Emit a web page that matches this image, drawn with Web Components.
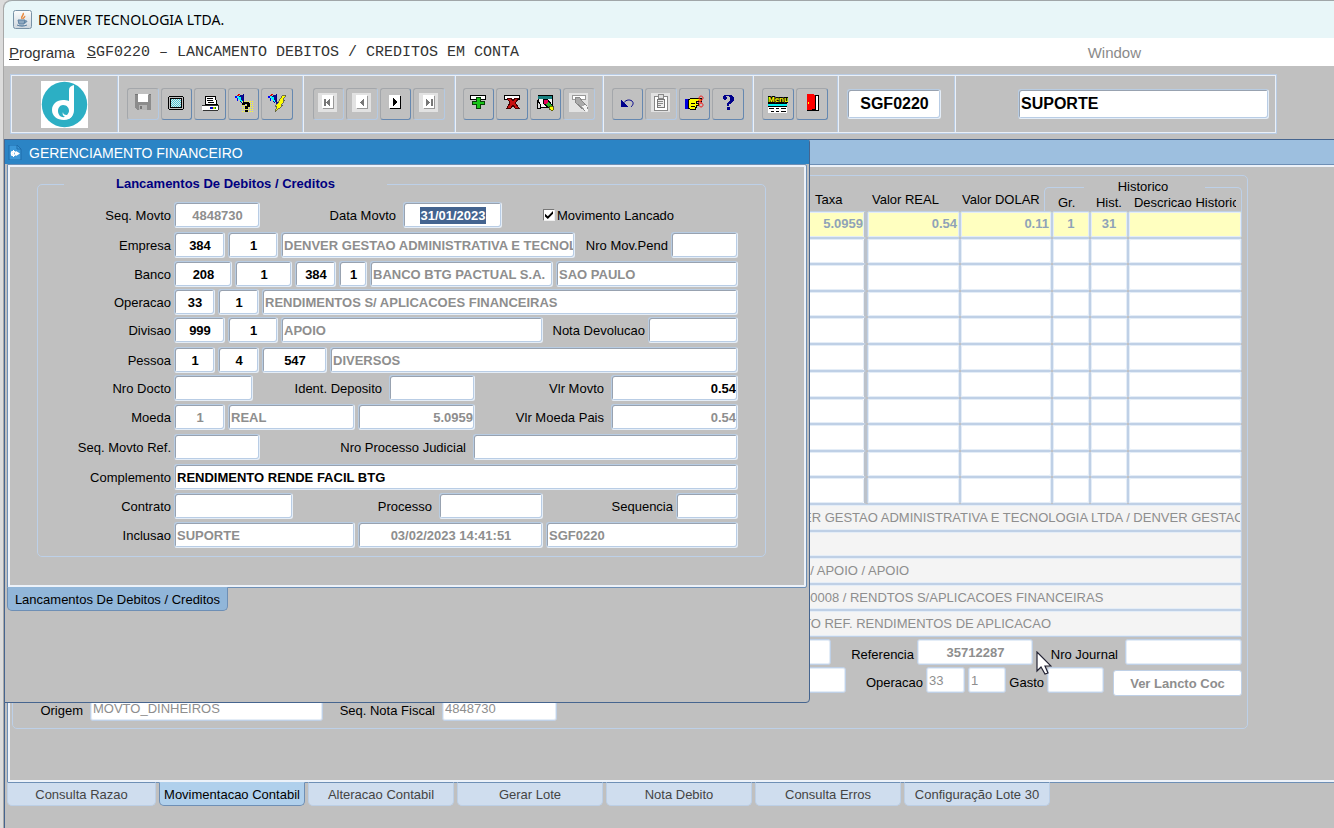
<!DOCTYPE html>
<html lang="pt-BR">
<head>
<meta charset="utf-8">
<title>DENVER TECNOLOGIA LTDA.</title>
<style>
html, body { margin: 0; min-height: 100%; }
body { background: #dcdcdc; font: 13px/16px "Liberation Sans", Arial, sans-serif; color: #000; overflow: hidden; }
</style>
</head>
<body>
<sgf-app></sgf-app>

<script>
const define = (name, css, html, setup) => {
  const tpl = document.createElement('template');
  tpl.innerHTML = '<style>*{box-sizing:border-box}' + css + '</style>' + html;
  customElements.define(name, class extends HTMLElement {
    connectedCallback() {
      if (this.shadowRoot) return;
      this.attachShadow({ mode: 'open' }).append(tpl.content.cloneNode(true));
      if (setup) setup(this, this.shadowRoot);
    }
  });
};

const FLASHLIGHT = '<path d="M2 3l3-2 1 1-3 2z" fill="#d00"/><path d="M3 3l6-1 1 6-3 2z" fill="#0d0d8c"/><path d="M3 3l3 5 2 1-1-5z" fill="#0ff"/><path d="M1 3h2v2H1zM3 5h1v3H3z" fill="#00f"/><path d="M9 1h1v8h1v2H9z" fill="#00008b"/>';
const PAGE = (ink, edge) => '<path d="M5 3h11v13H5z" fill="' + edge + '"/><path d="M4 2h11v13H4z" fill="#fff"/><g fill="' + ink + '">';
const PALE = '<path d="M0 0h19v19H0z" fill="#e2e2e2"/>';
const ICONS = {
  save: '<path d="M2 2h16v15H4l-2-2z" fill="#8c8c8c"/><path d="M5 1h10v8H5z" fill="#fff"/><path d="M6 12h8v5H6z" fill="#b4b4b4"/><path d="M7 13h2v3H7z" fill="#777"/><path d="M2 1h3v1H2zM16 1h2v1h-2z" fill="#777"/>',
  screen: '<path d="M3 3h14v1h1v12h-1v1H3v-1H2V4h1z"/><path d="M3 4h14v12H3z" fill="#c0c0c0"/><path d="M4 5h12v10H4z"/><path d="M5 6h10v8H5z" fill="#e8e8e8"/><path d="M5 6.500h10M5 8.500h10M5 10.500h10M5 12.500h10" stroke="#40c8d8" stroke-dasharray="1 1"/><path d="M6 7.500h9M6 9.500h9M6 11.500h9M6 13.500h9" stroke="#40c8d8" stroke-dasharray="1 1"/>',
  print: '<path d="M6 3h9l2 8H5V3z" fill="#fff" stroke="#000"/><path d="M7 5.500h6M7 7.500h6M8 9.500h6" stroke="#000"/><path d="M2 12h16v5H2z" fill="#fff"/><path d="M2 12.500h16M18 12v5M3 17.500h15" stroke="#333"/><path d="M10 14h3v2h-3z" fill="#00c"/><path d="M13 14h2v2h-2z" fill="#d0d000"/><path d="M15 14h1v2h-1z" fill="#0a0"/>',
  ask: FLASHLIGHT + '<path d="M8 8.500h11M8 10.500h11M8 12.500h11M8 14.500h11M8 16.500h11M8 18.500h11" stroke="#ffff20" stroke-dasharray="1 1"/><path d="M9 9h6v1h1v4h-2v2h-3v-3h2v-2h-2v1H8v-2h1zM11 17h3v2h-3z"/>',
  bolt: FLASHLIGHT + '<path d="M16 2h3l-3 5h2l-4 5h2l-8 7 2-6H8l4-4h-1z" fill="#ff0" stroke="#554" stroke-width=".8"/>',
  first: PALE + PAGE('#777', '#999') + '<path d="M6 6h2v7H6zM12 6v7L8 9.500z"/></g>',
  prev: PALE + PAGE('#777', '#999') + '<path d="M12 6v7L8 9.500z"/></g>',
  next: PAGE('#000', '#000') + '<path d="M8 5v8l4-4z"/></g>',
  last: PALE + PAGE('#777', '#999') + '<path d="M12 6h2v7h-2zM7 6v7l4-3.500z"/></g>',
  add: '<path d="M2 2h15v4H2z" fill="#fff" stroke="#000"/><path d="M8.500 4.500h4v4h4v3h-4v4h-4v-4h-4v-3h4z" fill="#18c418" stroke="#064006"/>',
  remove: '<path d="M2 2h15v4H2z" fill="#fff" stroke="#000"/><path d="M5 5h4l2 3 2-3h4l-4 5 4 5h-4l-2-3-2 3H5l3-5z" fill="#c81010" stroke="#400"/>',
  clear: '<path d="M3 2h14v12H3z" fill="#f4f4f4" stroke="#000"/><path d="M3 3h14v3H3z" fill="#188080"/><path d="M2 7l3 4v4H2z" fill="#ddd" stroke="#000"/><path d="M8 6l4 0 6 7-3 3-7-6z" fill="#e8005c" stroke="#000"/><path d="M13 9l5 5-2 3-5-6z" fill="#28b428"/><path d="M15 13l3 0 1 3-2 2-3-2z" fill="#ff0" stroke="#000" stroke-width=".6"/>',
  noclear: PALE + '<path d="M3 2h13v4H3z" fill="#fff" stroke="#999"/><path d="M6 5l4-1 9 11-3 3L6 9z" fill="#aaa" stroke="#888"/><path d="M13 13l4-1 2 5-2 2z" fill="#f4f4f4"/>',
  undo: '<path d="M6 11c2-4 6-5 9-3 2 2 1 4-1 6" fill="none" stroke="#00008b" shape-rendering="auto"/><path d="M4 7v7h7z" fill="#00008b"/>',
  clip: PALE + '<path d="M3 3h13v14H3z" fill="#fff" stroke="#888"/><path d="M6 6h7v8H6z" fill="#eee" stroke="#777"/><path d="M7 1h5v4H7z" fill="#ddd" stroke="#888"/><path d="M7 8.500h5M7 10.500h5M7 12.500h3" stroke="#888"/>',
  hand: '<path d="M1 6h3v10H1z" fill="#00d"/><path d="M4 7l4-2h9v3h-5v2h2v2h-2v2h-1v2H6l-2-1z" fill="#ff0" stroke="#000"/><path d="M7 10h4M7 13h4" stroke="#000"/><path d="M17 3a2 2 0 1 0 .1 0M17 10a2 2 0 1 0 .1 0M14 7l4 3M18 7l-4 3" fill="none" stroke="#f02020" shape-rendering="auto"/>',
  help: '<path d="M6 2h8v1h1v1h1v4h-1v1h-1v1h-1v1h-2v2H9v-3h1V9h1V8h1V4h-1V3H8v1h1v2H8v1H6V6H5V3h1zM9 14h3v3H9z" fill="#00008b"/>',
  menu: '<text x="0" y="9" font-family="Liberation Sans, sans-serif" font-weight="700" font-size="8" fill="#ff0" stroke="#000" stroke-width="2" paint-order="stroke">Menu</text><path d="M0 10h19v1H0zM0 13h19v1H0z"/><path d="M0 11h19v2H0z" fill="#0ee"/><path d="M0 14h19v6H0z" fill="#fff"/><path d="M1 15.500h5M8 15.500h3M13 15.500h5M3 18.500h3M8 18.500h3M13 18.500h5" stroke="#000"/>',
  exit: '<path d="M5 2h11v15H5z" fill="#fff" stroke="#000"/><path d="M5 1h6l2 2v15l-3-1H5z" fill="#f00"/><path d="M10 16h3v2h-3zM13 3h1v14h-1z"/><path d="M6 9h1v2H6z" fill="#ff0"/>'
};

/* One push button of the toolbar, with its icon. */
define('tool-button', `
:host { display: block; min-width: 0; }
button { display: flex; align-items: center; justify-content: center; width: 100%; height: 32px; margin: 0; padding: 0 0 2px;
  background: none; border: 1px solid #a4a7ab; border-right-color: #6688b0; border-bottom-color: #6688b0; border-radius: 3px; }
button:disabled { border-right-color: #b4c9e2; border-bottom-color: #b4c9e2; }
svg { width: 20px; height: 20px; flex: none; }
`, '<button type="button"><svg viewBox="0 0 20 20" shape-rendering="crispEdges"></svg></button>', (el, root) => {
  const b = root.querySelector('button');
  b.setAttribute('aria-label', el.getAttribute('label'));
  b.disabled = el.hasAttribute('off');
  root.querySelector('svg').innerHTML = ICONS[el.getAttribute('icon')];
});

/* A cell of the toolbar; its buttons share the width evenly. */
define('tool-group', `
:host { display: flex; align-items: center; justify-content: center; border-left: 1px solid #b9cce4; box-shadow: inset 1px 0 0 #eaf0f8; }
div { display: grid; grid-auto-flow: column; grid-auto-columns: 1fr; gap: 2px; flex: none; width: var(--inner, auto); }
`, '<div><slot></slot></div>');

define('denver-logo', ':host{display:block;width:47px;height:47px}svg{display:block}', `
<svg width="47" height="47" viewBox="0 0 47 47"><path d="M0 0h47v47H0z" fill="#fff"/><circle cx="23.500" cy="23.500" r="22.700" fill="#2cafc4"/>
<path d="M33 4v25c0 6-4 10-10 10-7 0-12-4-12-10s5-10 11-10c2 0 4 0 6 1V9c0-3 2-4 5-5z" fill="#fff"/>
<path d="M22 24c4 0 6 3 6 6 0 1-1 3-2 4-3 0-4-1-4-3-1 2 0 4 2 5-5 1-7-3-7-6s2-6 5-6z" fill="#2cafc4"/><path d="M24 35c4 1 7-1 8-4 0 5-4 8-8 7z" fill="#fff"/></svg>`);

define('title-bar', `
:host { display: flex; align-items: center; gap: 6px; height: 38px; padding-left: 9px; background: #e8f6f8; border-top: 1px solid #a0a6a8; border-radius: 8px 0 0 0; font: 14px/20px "Noto Sans", sans-serif; }
`, `<svg width="19" height="19" viewBox="0 0 19 19"><defs><linearGradient id="g" x2="0" y2="1"><stop stop-color="#fdfdfd"/><stop offset="1" stop-color="#cdd6dd"/></linearGradient></defs>
<rect x=".5" y=".5" width="18" height="18" rx="2" fill="url(#g)" stroke="#7892a6"/><path d="M10 3c2 2-3 3-1 6M11.500 6c1 1-2 2-1 3" fill="none" stroke="#e8873c" stroke-width="1.500"/><path d="M5 10h7l-1 4H6zM12 11c3-1 2 2-1 2M4 15c3 1.500 7 1.500 10 0" fill="#8fa9c0" stroke="#5a7fa0"/></svg><span><slot></slot></span>`);

define('menu-bar', `
:host { display: flex; align-items: center; gap: 12px; height: 28px; padding: 2px 193px 0 5px; background: #fff; }
button { margin: 0; padding: 0; border: 0; background: none; font: 15px/20px "Liberation Sans", Arial, sans-serif; color: #333; white-space: nowrap; }
.code { font-family: "Courier New", "Liberation Mono", monospace; }
.win { margin-left: auto; color: #8a8a8a; }
`, `<button type="button"><u>P</u>rograma</button><button type="button" class="code"><u>S</u>GF0220 – LANCAMENTO DEBITOS / CREDITOS EM CONTA</button><button type="button" class="win">Window</button>`);

/* A text box with an optional label in front of it. */
define('form-field', `
:host { display: flex; align-items: center; gap: 3px; min-width: 0; flex: none; }
:host([grow]) { flex: 1; }
label { flex: 1; padding-top: 2px; text-align: right; white-space: nowrap; }
:host([flat]) label { padding-top: 5px; }
:host([lead]) label { flex: none; width: var(--lead, 133px); }
:host([wide]) label { padding-right: 4px; }
input { flex: none; width: var(--w, 60px); height: 26px; margin: 0; padding: 0 1px 0 2px; outline: 0;
  border: 1px solid #b8cce2; border-right-color: #e4edf7; border-bottom-color: #e4edf7; border-radius: 3px; background: #fff;
  box-shadow: inset 1px 1px 0 #98a2b0, inset -1px -1px 0 #b9cde5; font: bold 13px/16px "Liberation Sans", Arial, sans-serif; color: #000; text-align: var(--align, left); }
:host([grow]:not([label])) input { flex: 1; width: 0; }
:host([muted]) input { color: #8e8e8e; }
:host([flat]) input { border-color: #bfd0e6; box-shadow: inset 0 0 0 1px #e4edf7; }
:host([strip]) input { background: #f4f4f4; border-radius: 1px; width: 100%; height: 100%; }
:host([plain]) input { font-weight: normal; }
:host([big]) input { height: 30px; font-size: 16px; line-height: 20px; }
:host([selected]) input { color: #fff; background: linear-gradient(#43638f, #43638f) center/66px 17px no-repeat #fff; }
`, '<label for="i"></label><input id="i" type="text">', (el, root) => {
  const l = root.querySelector('label'), i = root.querySelector('input');
  if (el.hasAttribute('label')) l.textContent = el.getAttribute('label');
  else { l.remove(); i.setAttribute('aria-label', el.getAttribute('name') || 'Campo'); }
  i.value = el.getAttribute('value') || '';
  i.readOnly = el.hasAttribute('muted');
});

define('check-field', `
:host { display: flex; align-items: center; }
label { display: flex; align-items: center; gap: 2px; }
span { padding-top: 2px; }
input { appearance: none; width: 12px; height: 12px; margin: 0; background: #fff; border: 1px solid #eee; border-top-color: #777; border-left-color: #777; display: grid; place-items: center; }
input:checked::before { content: ""; width: 8px; height: 8px; background: #000; clip-path: polygon(0 35%, 35% 65%, 100% 0, 100% 35%, 35% 100%, 0 70%); }
`, '<label><input type="checkbox" checked><span><slot></slot></span></label>');

define('form-row', `
:host { display: flex; gap: 3px; min-height: 26px; margin-bottom: 2px; }
:host([m]) { margin-bottom: 3px; }
:host([l]) { margin-bottom: 4px; }
:host([last]) { margin-bottom: 0; }
:host([end]) { justify-content: flex-end; }
`, '<slot></slot>');

/* Child window: caption, framed pane, tab strip below the pane. */
define('mdi-window', `
:host { display: flex; flex-direction: column; border: 1px solid #46658f; background: #c0c0c0; }
header { display: flex; align-items: center; gap: 6px; height: 24px; flex: none; padding: 1px 0 0 3px; background: #9dbfdf; color: #fff; font-size: 14px; }
:host([active]) header { background: #2b84c5; }
.pane { margin: 0 2px; padding: 0; border: 1px solid #6e8fb5; box-shadow: inset 0 0 0 2px #edf2f9; border-radius: 0 2px 2px 0; }
:host([main]) .pane { margin-right: 0; border-right: 0; box-shadow: inset 2px 2px 0 #edf2f9, inset 0 -2px 0 #edf2f9; border-radius: 0; }
nav { display: flex; margin: -1px 2px 0; }
`, `<header><svg width="15" height="15" viewBox="0 0 15 15"><path d="M1 0h8l4 4v11H1z" fill="#3b97d8" stroke="#1f6dab"/><path d="M9 0v4h4" fill="none" stroke="#1f6dab"/><circle cx="5.500" cy="8.500" r="2" fill="none" stroke="#fff" stroke-width="1.500"/><path d="M5.500 5v7M3 8.500h2M3.500 6.500l1 1M3.500 10.500l1-1" stroke="#fff"/><path d="M8 6v5l4-2.500z" fill="#fff"/></svg><span id="t"></span></header><div class="pane"><slot></slot></div><nav><slot name="tabs"></slot></nav>`, (el, root) => {
  if (el.hasAttribute('caption')) root.getElementById('t').textContent = el.getAttribute('caption');
  else root.querySelector('svg').remove();
});

define('page-tab', `
:host { display: block; width: 146px; margin-right: 3px; }
button { width: 100%; height: 24px; margin: 0; padding: 1px 0 0; font: 13px/16px "Liberation Sans", Arial, sans-serif; white-space: nowrap; color: #444;
  background: #cfddee; border: 1px solid #bccfe6; border-top-color: #6e8fb5; border-radius: 0 0 5px 5px; }
:host([on]) button { color: #000; background: var(--on, #b0d0ec); border: 1px solid #6e8fb5; border-top-color: var(--on, #b0d0ec); }
`, '<button type="button"><slot></slot></button>');

define('group-box', `
:host { display: block; }
fieldset { margin: 0; min-width: 0; padding: 8px 27px 8px 0; border: 1px solid #bdd0e8; border-radius: 5px; }
legend { margin-left: 26px; padding: 0 52px; font-weight: bold; line-height: 20px; color: #000080; }
`, '<fieldset><legend></legend><slot></slot></fieldset>', (el, root) => { root.querySelector('legend').textContent = el.getAttribute('caption'); });

define('entry-table', `
:host { display: block; }
table { width: 100%; border-spacing: 0; table-layout: fixed; }
th { padding: 0; font-weight: normal; text-align: left; vertical-align: bottom; overflow: hidden; white-space: nowrap; }
thead tr:first-child { height: 18px; } thead tr:last-child { height: 17px; }
th[rowspan] { padding: 0 0 3px 5px; }
.taxa[rowspan] { padding-left: 8px; }
.dolar[rowspan] { padding-left: 2px; }
.sub { padding: 0 0 1px 6px; line-height: 15px; }
.sub span { display: block; overflow: hidden; margin-right: 6px; }
.group { position: relative; overflow: visible; text-align: center; line-height: 15px; padding-right: 8px; vertical-align: bottom; }
.group::before, .group::after { content: ""; position: absolute; top: 11px; height: 24px; border-top: 1px solid #bdd0e8; }
.group::before { left: -8px; width: 39px; border-left: 1px solid #bdd0e8; border-radius: 5px 0 0 0; }
.group::after { right: 0; width: 36px; border-right: 1px solid #bdd0e8; border-radius: 0 5px 0 0; }
td { height: 26px; padding: 0 2px; border: 1px solid #bfd0e6; box-shadow: inset 0 0 0 1px #e4edf7; border-radius: 2px; background: #fff; text-align: right; font-weight: bold; color: #8fa3b8; }
tr:nth-child(odd) td { height: 27px; } tbody tr:nth-child(6) td { height: 27px; }
td.taxa { border-right: 3px solid #bcc2ca; padding-right: 1px; }
td.mid { text-align: center; }
tbody tr:first-child td { background: #ffffc0; padding-bottom: 2px; }
`, `<table><colgroup><col><col style="width:60px"><col style="width:93px"><col style="width:92px"><col style="width:38px"><col style="width:38px"><col style="width:114px"></colgroup>
<thead><tr><th rowspan="2"></th><th rowspan="2" class="taxa">Taxa</th><th rowspan="2">Valor REAL</th><th rowspan="2" class="dolar">Valor DOLAR</th><th colspan="3" class="group">Historico</th></tr>
<tr><th class="sub">Gr.</th><th class="sub">Hist.</th><th class="sub"><span>Descricao Historico</span></th></tr></thead><tbody></tbody></table>`, (el, root) => {
  const body = root.querySelector('tbody'), first = ['', '5.0959', '0.54', '0.11', '1', '31', ''];
  for (let r = 0; r < 11; r++) {
    const tr = body.insertRow();
    first.forEach((v, c) => {
      const td = tr.insertCell();
      if (r === 0) td.textContent = v;
      if (c === 1) td.className = 'taxa';
      if (c === 4 || c === 5) td.className = 'mid';
    });
  }
});

define('push-button', `
:host { display: block; flex: none; width: 129px; margin: 3px 0 -3px; }
button { width: 100%; height: 26px; margin: 0; padding: 1px 0 0; background: #fff; border: 1px solid #bfd0e6; border-radius: 3px; font: bold 13px/16px "Liberation Sans", Arial, sans-serif; color: #8e8e8e; }
`, '<button type="button"><slot></slot></button>');

define('journal-panel', `
:host { display: block; margin: 10px 86px 53px 4px; border: 1px solid #bdd0e8; border-radius: 5px; padding: 0 5px 7px 0; }
.strips { display: grid; grid-template-rows: repeat(5, 1fr); height: 133px; margin: 0 0 2px 787px; }
`, `<entry-table></entry-table>
<div class="strips">
<form-field flat strip plain muted name="Empresa" value="ER GESTAO ADMINISTRATIVA E TECNOLOGIA LTDA / DENVER GESTAO"></form-field>
<form-field flat strip plain muted name="Conta"></form-field>
<form-field flat strip plain muted name="Divisao" value="  / APOIO / APOIO"></form-field>
<form-field flat strip plain muted name="Operacao" value="00008 / RENDTOS S/APLICACOES FINANCEIRAS"></form-field>
<form-field flat strip plain muted name="Complemento" value="TO REF. RENDIMENTOS DE APLICACAO"></form-field>
</div>
<form-row end>
<form-field flat name="Lote" style="--w:60px"></form-field>
<form-field flat muted label="Referencia" value="35712287" style="width:199px;--w:116px;--align:center"></form-field>
<form-field flat wide label="Nro Journal" style="width:206px;--w:117px"></form-field>
</form-row>
<form-row end>
<form-field flat name="Conta" style="--w:70px"></form-field>
<form-field flat plain muted label="Operacao" value="33" style="width:116px;--w:39px"></form-field>
<form-field flat plain muted name="Operacao 2" value="1" style="--w:38px"></form-field>
<form-field flat label="Gasto" style="width:95px;--w:57px;margin-right:6px"></form-field>
<push-button>Ver Lancto Coc</push-button>
</form-row>
<form-row last>
<form-field flat plain muted lead wide label="Origem" value="MOVTO_DINHEIROS" style="--lead:74px;--w:233px"></form-field>
<form-field flat plain muted wide label="Seq. Nota Fiscal" value="4848730" style="width:231px;--w:115px"></form-field>
</form-row>`);

define('movement-form', `
:host { display: block; margin: 9px 40px 30px 29px; }
.c { --align: center; } .r { --align: right; }
`, `<group-box caption="Lancamentos De Debitos / Creditos">
<form-row l><form-field lead muted class="c" label="Seq. Movto" value="4848730" style="--w:86px"></form-field>
<form-field wide selected class="c" label="Data Movto" value="31/01/2023" style="width:239px;--w:99px"></form-field><check-field style="margin-left:38px">Movimento Lancado</check-field></form-row>
<form-row m><form-field lead class="c" label="Empresa" value="384" style="--w:51px"></form-field><form-field class="c" name="Filial" value="1" style="--w:50px"></form-field>
<form-field muted name="Nome da empresa" value="DENVER GESTAO ADMINISTRATIVA E TECNOLOGIA LTDA" style="--w:294px"></form-field><form-field grow label="Nro Mov.Pend" style="--w:67px"></form-field></form-row>
<form-row><form-field lead class="c" label="Banco" value="208" style="--w:58px"></form-field><form-field class="c" name="Agencia" value="1" style="--w:57px"></form-field><form-field class="c" name="Conta" value="384" style="--w:41px"></form-field><form-field class="c" name="Digito" value="1" style="--w:28px"></form-field>
<form-field muted name="Nome do banco" value="BANCO BTG PACTUAL S.A." style="--w:183px"></form-field><form-field grow muted name="Praca" value="SAO PAULO"></form-field></form-row>
<form-row><form-field lead class="c" label="Operacao" value="33" style="--w:41px"></form-field><form-field class="c" name="Sub-operacao" value="1" style="--w:41px"></form-field><form-field grow muted name="Nome da operacao" value="RENDIMENTOS S/ APLICACOES FINANCEIRAS"></form-field></form-row>
<form-row l><form-field lead class="c" label="Divisao" value="999" style="--w:51px"></form-field><form-field class="c" name="Subdivisao" value="1" style="--w:50px"></form-field><form-field muted name="Nome da divisao" value="APOIO" style="--w:262px"></form-field><form-field grow label="Nota Devolucao" style="--w:90px"></form-field></form-row>
<form-row><form-field lead class="c" label="Pessoa" value="1" style="--w:41px"></form-field><form-field class="c" name="Tipo" value="4" style="--w:41px"></form-field><form-field class="c" name="Codigo" value="547" style="--w:65px"></form-field><form-field grow muted name="Nome da pessoa" value="DIVERSOS"></form-field></form-row>
<form-row m><form-field lead label="Nro Docto" style="--w:79px"></form-field><form-field wide label="Ident. Deposito" style="width:219px;--w:86px"></form-field><form-field grow wide class="r" label="Vlr Movto" value="0.54" style="--w:127px"></form-field></form-row>
<form-row l><form-field lead muted class="c" label="Moeda" value="1" style="--w:51px"></form-field><form-field muted name="Nome da moeda" value="REAL" style="--w:127px"></form-field><form-field muted class="r" name="Cotacao" value="5.0959" style="--w:117px"></form-field><form-field grow wide muted class="r" label="Vlr Moeda Pais" value="0.54" style="--w:127px"></form-field></form-row>
<form-row l><form-field lead label="Seq. Movto Ref." style="--w:86px"></form-field><form-field grow wide label="Nro Processo Judicial" style="--w:265px"></form-field></form-row>
<form-row m><form-field lead label="Complemento" value="RENDIMENTO RENDE FACIL BTG" style="--w:564px"></form-field></form-row>
<form-row m><form-field lead label="Contrato" style="--w:119px"></form-field><form-field label="Processo" wide style="width:247px;--w:104px"></form-field><form-field grow label="Sequencia" style="--w:62px"></form-field></form-row>
<form-row last><form-field lead muted label="Inclusao" value="SUPORTE" style="--w:181px"></form-field><form-field muted class="c" name="Data" value="03/02/2023 14:41:51" style="--w:185px"></form-field><form-field grow muted name="Programa" value="SGF0220"></form-field></form-row>
</group-box>`);

define('tool-bar', `
:host { display: block; padding: 8px 57px 5px 6px; background: #c0c0c0; }
div { display: flex; height: 60px; border: 1px solid #b9cce4; outline: 1px solid #eaf0f8; outline-offset: -2px; padding: 1px; }
tool-group { flex: none; }
.logo { width: 105px; border: 0; box-shadow: none; } .code { width: 117px; padding-right: 4px; } .user { flex: 1; justify-content: flex-end; padding-right: 6px; }
`, `<div>
<tool-group class="logo"><denver-logo></denver-logo></tool-group>
<tool-group style="width:185px;--inner:166px"><tool-button icon="save" label="Salvar" off></tool-button><tool-button icon="screen" label="Tela"></tool-button><tool-button icon="print" label="Imprimir"></tool-button><tool-button icon="ask" label="Entrar consulta"></tool-button><tool-button icon="bolt" label="Executar consulta"></tool-button></tool-group>
<tool-group style="width:152px;--inner:132px"><tool-button icon="first" label="Primeiro" off></tool-button><tool-button icon="prev" label="Anterior" off></tool-button><tool-button icon="next" label="Proximo"></tool-button><tool-button icon="last" label="Ultimo" off></tool-button></tool-group>
<tool-group style="width:148px;--inner:132px"><tool-button icon="add" label="Inserir"></tool-button><tool-button icon="remove" label="Excluir"></tool-button><tool-button icon="clear" label="Limpar"></tool-button><tool-button icon="noclear" label="Limpar registro" off></tool-button></tool-group>
<tool-group style="width:150px;--inner:132px"><tool-button icon="undo" label="Desfazer"></tool-button><tool-button icon="clip" label="Colar" off></tool-button><tool-button icon="hand" label="Lista"></tool-button><tool-button icon="help" label="Ajuda"></tool-button></tool-group>
<tool-group style="width:85px;--inner:66px"><tool-button icon="menu" label="Menu"></tool-button><tool-button icon="exit" label="Sair"></tool-button></tool-group>
<tool-group class="code"><form-field big name="Programa" value="SGF0220" style="--w:94px;--align:center"></form-field></tool-group>
<tool-group class="user"><form-field big name="Usuario" value="SUPORTE" style="--w:251px"></form-field></tool-group>
</div>`);

define('sgf-app', `
:host { display: block; margin-left: 3px; border-left: 1px solid #a8a8a8; background: #c0c0c0; min-height: 100vh; border-radius: 8px 0 0 0; }
main { position: relative; }
.ledger { border-right: 0; border-bottom: 0; min-height: calc(100vh - 139px); }
.dialog { position: absolute; left: 0; top: 0; width: 806px; min-height: 564px; border-radius: 0 3px 4px 0; --on: #91b6d9; }
.pointer { position: absolute; left: 1032px; top: 512px; }
`, `<title-bar>DENVER TECNOLOGIA LTDA.</title-bar><menu-bar></menu-bar><tool-bar></tool-bar>
<main>
<mdi-window class="ledger" main><journal-panel></journal-panel>
<page-tab slot="tabs" style="width:149px">Consulta Razao</page-tab><page-tab slot="tabs" on>Movimentacao Contabil</page-tab><page-tab slot="tabs">Alteracao Contabil</page-tab><page-tab slot="tabs">Gerar Lote</page-tab><page-tab slot="tabs">Nota Debito</page-tab><page-tab slot="tabs">Consulta Erros</page-tab><page-tab slot="tabs">Configuração Lote 30</page-tab>
</mdi-window>
<mdi-window class="dialog" active caption="GERENCIAMENTO FINANCEIRO"><movement-form></movement-form><page-tab slot="tabs" on style="width:221px">Lancamentos De Debitos / Creditos</page-tab></mdi-window>
<svg class="pointer" width="16" height="25" viewBox="0 0 16 25"><path d="M1 1v19l4-4 4 7 3-1-3-7h6z" fill="#fff" stroke="#222233" stroke-width="1.200"/></svg>
</main>`);
</script>
</body>
</html>
